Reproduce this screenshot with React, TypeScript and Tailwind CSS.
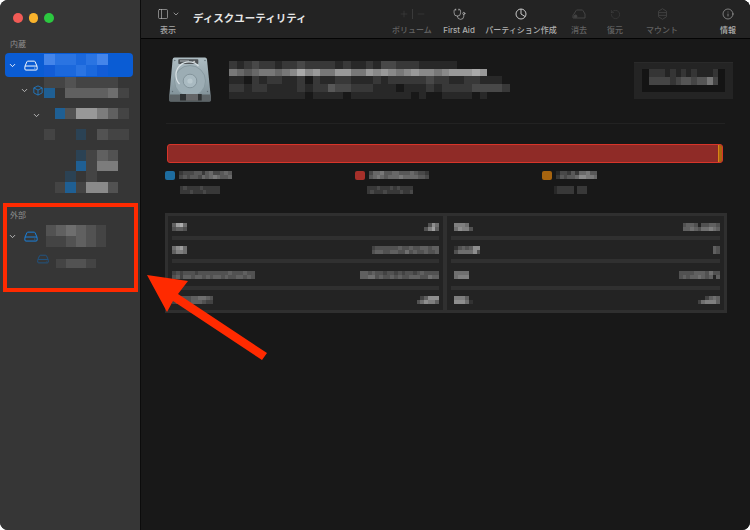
import React from "react";
import { ChevronDown, Info, Minus, PanelLeft, Plus, RotateCcw, Stethoscope } from "lucide-react";

const FONT = "font-['Inter','Noto_Sans_CJK_JP','Noto_Sans',sans-serif]";

function cellColor(c: string): string {
  if (c === "b") return "#1f5f93";
  if (c === "c") return "#2b4254";
  if (c === "d") return "#2a74e2";
  if (c === "e") return "#1b68dc";
  if (c === "f") return "#4485ea";
  if (c === "g") return "#125cd6";
  if (c === ".") return "transparent";
  return `rgba(255,255,255,${Number(c) * 0.07})`;
}

function Mosaic({ rows, w, h, className = "" }: { rows: string[]; w: number; h: number; className?: string }) {
  return (
    <div className={`flex flex-col shrink-0 ${className}`}>
      {rows.map((r, i) => (
        <div key={i} className="flex">
          {r.split("").map((c, j) => (
            <span key={j} className="block shrink-0" style={{ width: w, height: h, background: cellColor(c) }} />
          ))}
        </div>
      ))}
    </div>
  );
}

function Drive({ className = "" }: { className?: string }) {
  return (
    <svg viewBox="0 0 16 12" fill="none" stroke="currentColor" strokeWidth="1.1" strokeLinejoin="round" className={className}>
      <path d="M1 7 L3.4 1.6 Q3.7 1 4.4 1 H11.6 Q12.3 1 12.6 1.6 L15 7" />
      <rect x="1" y="6.6" width="14" height="4.6" rx="1.2" />
      <circle cx="12.4" cy="8.9" r="0.6" fill="currentColor" stroke="none" />
    </svg>
  );
}

function Cube({ className = "" }: { className?: string }) {
  return (
    <svg viewBox="0 0 12 13" fill="none" stroke="currentColor" strokeWidth="0.9" strokeLinejoin="round" className={className}>
      <path d="M6 1 L11 3.4 V9.4 L6 12 L1 9.4 V3.4 Z" />
      <path d="M1 3.4 L6 6 L11 3.4 M6 6 V12" />
    </svg>
  );
}

function Chev({ dim = false }: { dim?: boolean }) {
  return <ChevronDown size={9} strokeWidth={2.4} className={dim ? "text-[#c4c4c4]" : "text-white"} />;
}

function Sidebar() {
  const cell = 10.6;
  return (
    <aside className="w-[140px] shrink-0 bg-[#363636] border-r border-[#0c0c0c] flex flex-col box-content">
      <div className="flex gap-[6px] pl-[13px] pt-[13px] h-[38px] shrink-0">
        <span className="w-[9.5px] h-[9.5px] rounded-full bg-[#f15b56]" />
        <span className="w-[9.5px] h-[9.5px] rounded-full bg-[#f9b32c]" />
        <span className="w-[9.5px] h-[9.5px] rounded-full bg-[#2cc840]" />
      </div>
      <div className="pl-[10px] h-[15px] text-[8px] leading-[13px] text-[#8f8f8f] shrink-0">内蔵</div>

      <div className="ml-[5px] w-[128px] h-[24px] bg-[#0a5cd4] rounded-[4px] flex items-center shrink-0">
        <div className="w-[39px] flex items-center pl-[3px]">
          <Chev />
          <Drive className="w-[14px] h-[11px] text-white ml-[7px]" />
        </div>
        <Mosaic rows={["fddedf", "geedeg"]} w={cell} h={cell} />
      </div>

      <div className="h-[21px] flex shrink-0">
        <div className="w-[44px] h-[26px] flex items-center pl-[20px] shrink-0">
          <Chev dim />
          <Cube className="w-[10px] h-[13px] text-[#1c87e0] ml-[4px]" />
        </div>
        <Mosaic rows={["11211110", "b0333341"]} w={cell} h={cell} />
      </div>

      <div className="h-[10px] shrink-0" />

      <div className="h-[21px] flex shrink-0">
        <div className="w-[44px] h-[14px] flex items-center pl-[32px] shrink-0"><Chev dim /></div>
        <Mosaic rows={["0b277531", "00000000"]} w={cell} h={cell} />
      </div>
      <Mosaic className="ml-[44px]" rows={["100c0211", "00000000"]} w={cell} h={cell} />
      <Mosaic className="ml-[44px]" rows={["...c1320", "...b1550"]} w={cell} h={cell} />
      <Mosaic className="ml-[44px]" rows={["..c01000", ".1b1662."]} w={cell} h={cell} />

      <div className="pl-[10px] mt-[16px] h-[17px] text-[8px] leading-[12px] text-[#8f8f8f] shrink-0">外部</div>

      <div className="flex items-center h-[21px] shrink-0">
        <div className="w-[46px] flex items-center pl-[8px] shrink-0">
          <Chev dim />
          <Drive className="w-[14px] h-[11px] text-[#1a84e2] ml-[7px]" />
        </div>
        <Mosaic rows={["234321", "112321"]} w={10} h={cell} />
      </div>

      <div className="flex items-end h-[21px] shrink-0">
        <div className="w-[46px] pl-[37px] shrink-0"><Drive className="w-[12px] h-[10px] text-[#1d5a90] mb-[4px]" /></div>
        <Mosaic rows={["000000", "012210"]} w={10} h={9} />
      </div>
    </aside>
  );
}

function ToolItem({ label, width, ml, dim = false, children }: { label: string; width: string; ml: string; dim?: boolean; children: React.ReactNode }) {
  return (
    <div className={`${width} ${ml} shrink-0 flex flex-col items-center`}>
      <div className={`h-[16px] mt-[6px] flex items-center justify-center ${dim ? "text-[#444444]" : "text-[#c8c8c8]"}`}>{children}</div>
      <div className={`mt-[2px] text-[8px] leading-[12px] whitespace-nowrap font-medium ${dim ? "text-[#626262]" : "text-[#b0b0b0]"}`}>{label}</div>
    </div>
  );
}

function Toolbar() {
  return (
    <header className="h-[39px] shrink-0 bg-[#232323] border-b border-[#040404] flex">
      <div className="ml-[14px] w-[26px] shrink-0 flex flex-col items-center">
        <div className="h-[16px] mt-[6px] flex items-center gap-[3px] text-[#c4c4c4] w-[26px] pl-[2px]">
          <PanelLeft size={12} strokeWidth={1.2} />
          <ChevronDown size={8} strokeWidth={2} />
        </div>
        <div className="mt-[2px] text-[8px] leading-[12px] text-[#a8a8a8] font-medium">表示</div>
      </div>
      <div className="ml-[12px] mt-[12px] w-[124px] shrink-0 text-[10.5px] leading-[14px] font-bold text-[#e6e6e6] whitespace-nowrap">ディスクユーティリティ</div>
      <ToolItem label="ボリューム" width="w-[40px]" ml="ml-[75px]" dim>
        <Plus size={10} strokeWidth={1.2} />
        <span className="w-px h-[10px] bg-[#3a3a3a] mx-[3px]" />
        <Minus size={10} strokeWidth={1.2} />
      </ToolItem>
      <ToolItem label="First Aid" width="w-[40px]" ml="ml-[7px]"><Stethoscope size={13} strokeWidth={1.2} /></ToolItem>
      <ToolItem label="パーティション作成" width="w-[72px]" ml="ml-[6px]">
        <svg viewBox="0 0 12 12" fill="none" stroke="currentColor" strokeWidth="1" className="w-[12px] h-[12px]">
          <circle cx="6" cy="6" r="5" /><path d="M6 1 V6 L10 8.5" />
        </svg>
      </ToolItem>
      <ToolItem label="消去" width="w-[30px]" ml="ml-[7px]" dim>
        <svg viewBox="0 0 14 10" fill="none" stroke="currentColor" strokeWidth="1" className="w-[14px] h-[10px]">
          <path d="M1 9 V6.5 Q1 5.5 2 5 L4 1.6 Q4.3 1 5 1 H10 Q10.7 1 11 1.6 L13 5 V9 H1 Z" /><circle cx="3.5" cy="7.3" r="1.4" fill="currentColor" />
        </svg>
      </ToolItem>
      <ToolItem label="復元" width="w-[30px]" ml="ml-[6px]" dim><RotateCcw size={11} strokeWidth={1.2} /></ToolItem>
      <ToolItem label="マウント" width="w-[40px]" ml="ml-[12px]" dim>
        <svg viewBox="0 0 10 13" fill="none" stroke="currentColor" strokeWidth="1" className="w-[9px] h-[12px]">
          <path d="M5 0.6 L9.4 3.4 V9.6 L5 12.4 L0.6 9.6 V3.4 Z" /><path d="M1 5 H9 M1 8 H9" />
        </svg>
      </ToolItem>
      <ToolItem label="情報" width="w-[30px]" ml="ml-[31px]"><Info size={12} strokeWidth={1.1} /></ToolItem>
    </header>
  );
}

function DiskIcon() {
  return (
    <svg viewBox="0 0 44 46" className="w-[44px] h-[46px] shrink-0">
      <defs>
        <linearGradient id="dg" x1="0" y1="0" x2="0" y2="1">
          <stop offset="0" stopColor="#aebdc3" /><stop offset="0.55" stopColor="#93a4ab" /><stop offset="1" stopColor="#7a8a91" />
        </linearGradient>
      </defs>
      <path d="M6.5 0.5 H37 Q38.8 0.5 39 2.4 L42.7 39 V43 Q42.7 44.5 41 44.5 H3 Q1.3 44.5 1.3 43 V39 L4.6 2.4 Q4.8 0.5 6.5 0.5 Z" fill="url(#dg)" />
      <rect x="10.3" y="2.3" width="20" height="4.8" rx="0.8" fill="#4e5356" />
      <rect x="12" y="3.4" width="9" height="1.2" fill="#a4abae" />
      <path d="M24.5 5.6 l1.6 -2 l1.6 2 z" fill="#d8d8d8" />
      <circle cx="22" cy="24" r="15.5" fill="#9cadb4" stroke="#84959c" strokeWidth="0.8" />
      <path d="M11.5 27 A 11.5 11.5 0 0 1 30.5 9" fill="none" stroke="#d7e0e4" strokeWidth="1.3" />
      <circle cx="22" cy="24" r="6.8" fill="#a9bac1" stroke="#7c8d94" strokeWidth="0.8" />
      <circle cx="22" cy="24" r="2.6" fill="#b9c8ce" />
      <rect x="1.3" y="37.5" width="41.4" height="7" rx="1" fill="#5d6467" />
      <rect x="12" y="37" width="21.7" height="6.5" fill="#2e3133" />
      <path d="M19 37 v6.5 M21 37 v6.5 M23 37 v6.5 M25 37 v6.5 M27 37 v6.5 M29 37 v6.5" stroke="#c8c8c8" strokeWidth="0.7" />
      <circle cx="6.8" cy="3.5" r="0.7" fill="#5f6d73" />
      <circle cx="37" cy="3.5" r="0.7" fill="#5f6d73" />
      <circle cx="4.5" cy="34.5" r="0.7" fill="#5f6d73" />
      <circle cx="39.5" cy="34.5" r="0.7" fill="#5f6d73" />
    </svg>
  );
}

function Legend({ color, width, t1, t2, sub, subClass }: { color: string; width: string; t1: string; t2: string; sub: string[]; subClass: string }) {
  return (
    <div className={`${width} shrink-0`}>
      <div className="flex items-center h-[10px]">
        <span className={`w-[10px] h-[9px] rounded-[2px] ${color}`} />
        <Mosaic rows={[t1, t2]} w={3.75} h={4} className="ml-[4px]" />
      </div>
      <Mosaic rows={sub} w={3.3} h={4} className={`mt-[6px] ${subClass}`} />
    </div>
  );
}

function Cell({ a, b, h, last, pad = "px-[4px]" }: { a: string[]; b: string[]; h: string; last?: boolean; pad?: string }) {
  return (
    <>
      <div className={`${h} flex justify-between items-center ${pad} shrink-0`}>
        <Mosaic rows={a} w={3.75} h={4} />
        <Mosaic rows={b} w={3.75} h={4} />
      </div>
      {!last && <div className="h-[4px] bg-[#303030] mx-[4px] shrink-0" />}
    </>
  );
}

function InfoTable() {
  const rp = "pl-[7px] pr-[4px]";
  return (
    <div className="mt-[19px] ml-[24px] w-[562px] h-[100px] bg-[#232323] border-[3px] border-[#2f2f2f] flex shrink-0">
      <div className="w-[275px] shrink-0 flex flex-col pt-[1px]">
        <Cell h="h-[19px]" a={["4895", "3443"]} b={["0375", "3684"]} />
        <Cell h="h-[19px]" a={["5785", "4665"]} b={["233333343343344344", "344334433534334334"]} />
        <Cell h="h-[23px]" a={["2323332333333334333433", "3424434434344343344343"]} b={["443433233232332343333", "445534334343344433544"]} />
        <Cell h="h-[20px]" last a={["13333445543", "23443444322"]} b={["024777", "357664"]} />
      </div>
      <div className="w-[4px] bg-[#303030] shrink-0" />
      <div className="flex-1 flex flex-col pt-[1px]">
        <Cell pad={rp} h="h-[19px]" a={["6665", "57663"]} b={["3443033443", "4454355654"]} />
        <Cell pad={rp} h="h-[19px]" a={["1343477", "3555573"]} b={["43", "43"]} />
        <Cell pad={rp} h="h-[23px]" a={["55550", "56660"]} b={["33334443533", "34344543404"]} />
        <Cell pad={rp} h="h-[20px]" last a={["6664", "77751"]} b={["002454", "256664"]} />
      </div>
    </div>
  );
}

function Main() {
  return (
    <main className="flex-1 min-w-0 flex flex-col bg-[#181818]">
      <Toolbar />
      <section className="flex-1 flex flex-col">
        <div className="flex pl-[27px] pt-[18px] h-[84px] shrink-0">
          <DiskIcon />
          <Mosaic className="ml-[17px] mt-[4px]" w={7.6} h={7.7} rows={[
            "212322122322221211213322211111",
            "6545665679786688668787678776788898",
            "1102122112021122111212222232211221110",
            "2212211112122433222111011121222233332",
            "1111111111011110111111110100111101",
          ]} />
          <div className="ml-[auto] mr-[17px] mt-[5px] w-[99px] h-[37px] bg-[#242424] flex flex-col items-center shrink-0 pt-[6px] border-t-[1px] border-[#2a2a2a]">
            <div className="bg-[#141414] w-[83px] h-[23px] flex flex-col items-center">
              <Mosaic w={5.3} h={8} rows={["2221212121112", "3333234434463"]} />
            </div>
          </div>
        </div>
        <div className="h-px bg-[#222222] mx-[25px] shrink-0" />
        <div className="mt-[20px] ml-[26px] w-[556px] h-[19px] bg-[#8f2b27] border border-[#d8352a] rounded-[3px] flex justify-end shrink-0 overflow-hidden">
          <span className="w-[4px] bg-[#a9640f] border-l border-[#d98616]" />
        </div>
        <div className="mt-[7px] ml-[24px] flex shrink-0">
          <Legend color="bg-[#1d6c9f]" width="w-[190px]" t1="23334424533454" t2="34344354565445" sub={["232222322222", "222322232222"]} subClass="ml-[15px]" />
          <Legend color="bg-[#a6302a]" width="w-[187px]" t1="3556445544454332" t2="4565455565555443" sub={["22232223232222", "23222322223223"]} subClass="ml-[12px]" />
          <Legend color="bg-[#a7640f]" width="w-[180px]" t1="13324255644" t2="24344577665" sub={["1222220222", "1222220222"]} subClass="ml-[12px]" />
        </div>
        <InfoTable />
      </section>
    </main>
  );
}

export default function App() {
  return (
    <div className={`relative w-[750px] h-[530px] overflow-hidden bg-[#181818] rounded-[8px] flex ${FONT}`}>
      <Sidebar />
      <Main />
      <div className="absolute left-[3px] top-[203px] w-[135px] h-[89px] border-[4px] border-[#ff2a00]" />
      <svg className="absolute left-0 top-0 w-[750px] h-[530px] pointer-events-none" viewBox="0 0 750 530">
        <polygon points="147,275 188,281 178,294 267,353 262,360 173,301 167,312" fill="#ff2a00" />
      </svg>
    </div>
  );
}
